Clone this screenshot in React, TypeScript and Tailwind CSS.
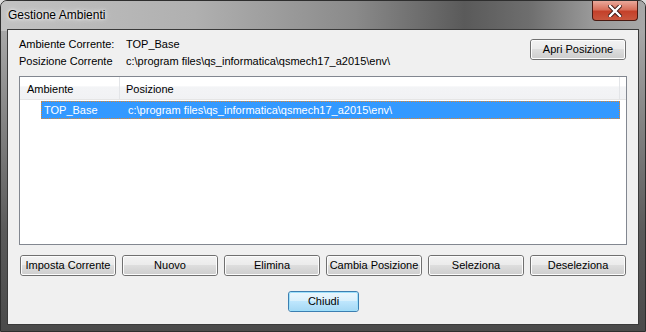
import React from 'react';

const font = { fontFamily: '"Liberation Sans", Arial, sans-serif' };

function WinButton({ label, def, className = '' }: { label: string; def?: boolean; className?: string }) {
  return (
    <div
      className={`relative flex items-center justify-center h-[21px] rounded-[3px] border text-[11px] text-black ${
        def ? 'border-[#3c7fb1]' : 'border-[#707070]'
      } ${className}`}
    >
      <div
        className={`absolute inset-0 rounded-[2px] border ${
          def
            ? 'border-[#9ee0fb] bg-[linear-gradient(to_bottom,#eaf6fd_0%,#d9f0fc_45%,#bee6fd_50%,#a7d9f5_100%)]'
            : 'border-[#fcfcfc] bg-[linear-gradient(to_bottom,#f2f2f2_0%,#ebebeb_45%,#dddddd_50%,#cfcfcf_100%)]'
        }`}
      />
      <span className="relative">{label}</span>
    </div>
  );
}

function CloseButton() {
  return (
    <div className="absolute top-0 right-[7px] w-[46px] h-[20px] rounded-b-[4px] border border-t-0 border-[#4a1a12] bg-[linear-gradient(to_bottom,#e9a99b_0%,#d7705c_45%,#c4412a_55%,#c8563e_100%)] flex items-center justify-center">
      <svg width="14" height="12" viewBox="0 0 14 12">
        <path d="M2 1 L12 11 M12 1 L2 11" stroke="#3a1410" strokeWidth="4.2" strokeLinecap="square" />
        <path d="M2 1 L12 11 M12 1 L2 11" stroke="#ffffff" strokeWidth="2.4" strokeLinecap="square" />
      </svg>
    </div>
  );
}

export default function App() {
  const buttons = ['Imposta Corrente', 'Nuovo', 'Elimina', 'Cambia Posizione', 'Seleziona', 'Deseleziona'];
  return (
    <div className="w-[646px] h-[332px] bg-[#dcdcdc]" style={font}>
      <div className="relative w-[646px] h-[332px] rounded-t-[7px] border border-[#2e2e2e] bg-[linear-gradient(to_bottom,#b4b4b4_0%,#8c8c8c_30%,#5a5a5a_70%,#4a4a4a_100%)] flex flex-col">
        <div className="absolute inset-x-0 top-0 h-[30px] rounded-t-[6px] bg-[linear-gradient(to_right,#c2c2c2_0%,#b0b0b0_30%,#8a8a8a_55%,#5a5a5a_72%,#6e6e6e_82%,#9a9a9a_92%,#a8a8a8_100%)]" />
        <div className="relative h-[28px] flex items-center pl-[7px] pb-[1px] text-[12px] text-black [text-shadow:0_0_6px_#ffffff,0_0_3px_#ffffff]">
          Gestione Ambienti
        </div>
        <CloseButton />
        <div className="relative mx-[6px] h-[296px] border border-[#3a3a3a] bg-[#f0f0f0] flex flex-col px-[11px] text-[11px] text-black">
          <div className="flex items-start pt-[6px]">
            <div className="flex-1">
              <div className="flex h-[17px] items-center">
                <span className="w-[107px]">Ambiente Corrente:</span>
                <span>TOP_Base</span>
              </div>
              <div className="flex h-[17px] items-center">
                <span className="w-[107px]">Posizione Corrente</span>
                <span>c:\program files\qs_informatica\qsmech17_a2015\env\</span>
              </div>
            </div>
            <WinButton label="Apri Posizione" className="w-[96px] mt-[3px] mr-[1px]" />
          </div>

          <div className="mt-[6px] h-[169px] border border-[#828790] bg-white flex flex-col">
            <div className="flex h-[23px] border-b border-[#e5e5e5] bg-[linear-gradient(to_bottom,#ffffff_0%,#ffffff_40%,#f3f4f6_45%,#f1f2f4_100%)]">
              <div className="w-[100px] pl-[7px] pt-[2px] flex items-center border-r border-[#e3e5e8]">Ambiente</div>
              <div className="w-[500px] pl-[6px] pt-[2px] flex items-center border-r border-[#e3e5e8]">Posizione</div>
              <div className="flex-1" />
            </div>
            <div className="mt-[1px] ml-[21px] mr-[6px] h-[18px] flex items-center bg-[#3399ff] text-white border border-dotted border-[#e0862c]">
              <span className="w-[78px] pl-[2px]">TOP_Base</span>
              <span className="pl-[8px]">c:\program files\qs_informatica\qsmech17_a2015\env\</span>
            </div>
          </div>

          <div className="mt-[10px] flex gap-[6px] pl-[1px]">
            {buttons.map((b) => (
              <WinButton key={b} label={b} className="w-[96px]" />
            ))}
          </div>

          <div className="mt-[15px] flex justify-center">
            <WinButton label="Chiudi" def className="w-[71px] ml-[1px]" />
          </div>
        </div>
      </div>
    </div>
  );
}
